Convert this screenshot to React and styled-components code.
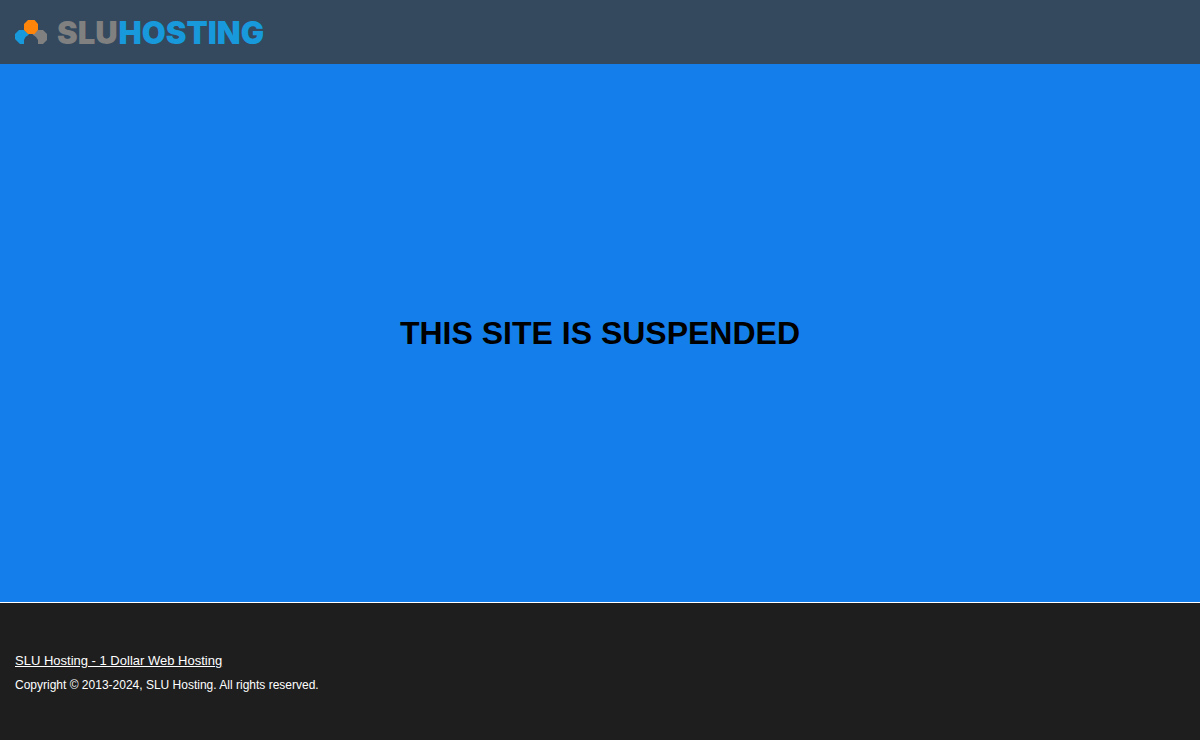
import React from 'react';
import styled, { createGlobalStyle } from 'styled-components';

const GlobalStyle = createGlobalStyle`
  body {
    margin: 0;
    font-family: Arial, 'Liberation Sans', sans-serif;
  }
`

const Page = styled.div`
  min-height: 100vh;
  display: flex;
  flex-direction: column;
  background-color: #147FEB;
`

const HeaderBar = styled.header`
  display: flex;
  align-items: center;
  height: 64px;
  padding: 0 15px;
  background-color: #34495E;
`

const Logo = styled.a`
  display: flex;
  align-items: center;
  gap: 9px;
  text-decoration: none;
`

const Wordmark = styled.span`
  display: flex;
  gap: 1px;
  padding-top: 2px;
`

const LogoText = styled.span`
  font-family: Inter, sans-serif;
  font-weight: 900;
  font-size: 31px;
  line-height: 32px;
  color: ${props => props.$color};
`

const Main = styled.main`
  flex: 1;
  display: flex;
  align-items: center;
  justify-content: center;
`

const Title = styled.h1`
  margin: 0;
  color: #000;
  font-size: 32px;
  line-height: 38px;
  text-align: center;
`

const FooterBar = styled.footer`
  padding: 48px 15px 46px;
  border-top: 1px solid #FFF;
  background-color: #1E1E1E;
  color: #FFF;
`

const FooterLink = styled.a`
  color: #FFF;
  font-size: 13px;
  line-height: 20px;
`

const Copyright = styled.p`
  margin: 5px 0 0;
  font-size: 12px;
  line-height: 18px;
`

function LogoMark() {
  return (
    <svg width="33" height="25" viewBox="0 0 33 25" aria-hidden="true">
      <path fill="#1799DC" d="M4 10h5l5 4.5-3.5 2.5L9 20v4H5l-5-5v-5z" />
      <path fill="#808080" d="M23 10h5l4 4v6l-4 4h-5v-4l-2-3-3.5-2.5z" />
      <path fill="#FF850A" d="M13 0h6.5L23 4v6l-3.500 4H13l-4-4V4z" />
    </svg>
  );
}

function Header() {
  return (
    <HeaderBar>
      <Logo href="#" aria-label="SLU Hosting">
        <LogoMark />
        <Wordmark>
          <LogoText $color="#808080">SLU</LogoText>
          <LogoText $color="#1799DC">HOSTING</LogoText>
        </Wordmark>
      </Logo>
    </HeaderBar>
  );
}

function Footer() {
  return (
    <FooterBar>
      <FooterLink href="#">SLU Hosting - 1 Dollar Web Hosting</FooterLink>
      <Copyright>Copyright © 2013-2024, SLU Hosting. All rights reserved.</Copyright>
    </FooterBar>
  );
}

function App() {
  return (
    <Page>
      <GlobalStyle />
      <Header />
      <Main>
        <Title>THIS SITE IS SUSPENDED</Title>
      </Main>
      <Footer />
    </Page>
  );
}

export default App;
